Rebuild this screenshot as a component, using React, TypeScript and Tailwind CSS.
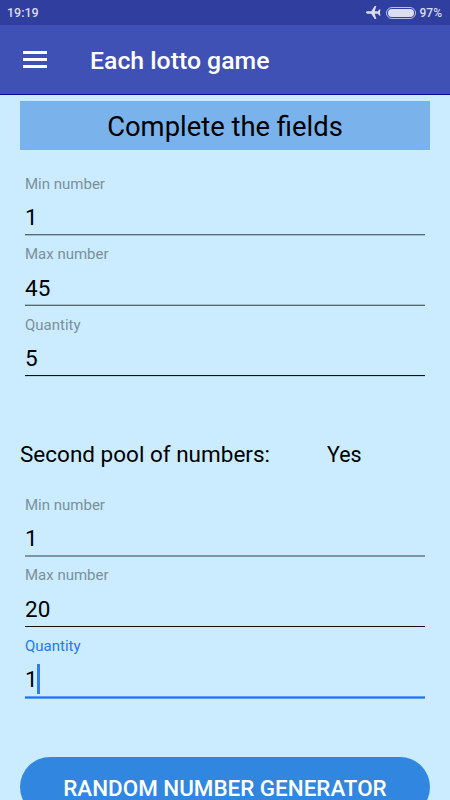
import clsx from 'clsx'

interface Field {
  label: string
  value: string
  height: string
  pad: string
  line: string
  active?: boolean
}

const firstPool: Field[] = [
  { label: 'Min number', value: '1', height: 'h-[71px]', pad: 'pt-[11px] pb-px', line: 'h-[2px] border-t border-[#566a74] bg-[#a3bdca]' },
  { label: 'Max number', value: '45', height: 'h-[70px]', pad: 'pt-[10px] pb-[2px]', line: '-mt-px h-[2px] border-b border-[#566a74] bg-[#a3bdca]' },
  { label: 'Quantity', value: '5', height: 'h-[71px]', pad: 'pt-[11px] pb-px', line: 'h-[2px] border-t border-[#0d1114] bg-[#b4d2e0]' },
]

const secondPool: Field[] = [
  { label: 'Min number', value: '1', height: 'h-[71px]', pad: 'pt-[11px] pb-px', line: 'h-[2px] bg-[#8094a3]' },
  { label: 'Max number', value: '20', height: 'h-[70px]', pad: 'pt-[10px] pb-[2px]', line: 'h-px bg-[#14100f]' },
  { label: 'Quantity', value: '1', height: 'h-[71px]', pad: 'pt-[11px] pb-px', line: 'h-[3px] border-y border-[#5b9df5] bg-[#1f74f2]', active: true },
]

function StatusBar() {
  return (
    <div className="flex h-[25px] shrink-0 items-center bg-[#303f9f] pl-[7px] pr-[8px] text-[#d9dcf1]">
      <span className="mt-[2px] text-[12.500px] font-medium leading-none">19:19</span>
      <svg className="ml-auto h-[13px] w-[15px]" viewBox="0 0 15 13" fill="currentColor">
        <path d="M0 6.500c0-.7.7-1.200 1.500-1.200h3.800L8.700 0h1.700L8.700 5.300h3.200l1.200-1.700h1.400l-.6 2.900.6 2.900h-1.400l-1.200-1.700H8.700l1.700 5.300H8.700L5.300 7.700H1.500C.7 7.700 0 7.200 0 6.500z" />
      </svg>
      <div className="ml-[5px] h-[12px] w-[30px] rounded-full border border-[#b9bfe6] p-px">
        <div className="h-full rounded-full bg-[#dcdff3]" />
      </div>
      <span className="ml-[4px] text-[12px] font-medium leading-none">97%</span>
    </div>
  )
}

function TextField({ field }: { field: Field }) {
  return (
    <div className={field.height}>
      <div className={clsx('flex h-[70px] flex-col justify-between', field.pad)}>
        <label className={clsx('block h-[18px] text-[15px] leading-[18px]', field.active ? 'text-[#2379f0]' : 'text-[#7b909b]')}>
          {field.label}
        </label>
        <div className={clsx('flex h-[32px] items-center text-[22.500px] leading-[32px] text-black', field.height === 'h-[70px]' ? '-mb-[1px]' : 'mb-0')}>
          {field.value}
          {field.active && <span className="-ml-px h-[30px] w-[3px] bg-[#2f7eea]" />}
        </div>
      </div>
      <div className={field.line} />
    </div>
  )
}

export default function App() {
  return (
    <div className="flex h-[800px] w-[450px] flex-col overflow-hidden bg-[#cbecfe] font-['Roboto',sans-serif]">
      <StatusBar />
      <header className="flex h-[70px] shrink-0 items-center border-b border-[#0a08a0] bg-[#3f51b5] pl-[23px] text-white">
        <div className="flex w-[24px] flex-col gap-[4px]">
          <div className="h-[3px] bg-white" />
          <div className="h-[3px] bg-white" />
          <div className="h-[3px] bg-white" />
        </div>
        <h1 className="ml-[43px] mt-[3px] text-[24.800px] font-medium leading-none">Each lotto game</h1>
      </header>

      <main className="px-[20px] pt-[6px]">
        <h2 className="flex h-[49px] items-center justify-center bg-[#7ab3eb] pt-[5px] text-[27.400px] leading-none text-black">
          Complete the fields
        </h2>

        <div className="mt-[14px] px-[5px]">
          {firstPool.map(f => <TextField key={f.label} field={f} />)}
        </div>

        <div className="mt-[63px] flex h-[32px] items-center text-black">
          <span className="w-[307px] text-[22.500px]">Second pool of numbers:</span>
          <span className="text-[21.400px]">Yes</span>
        </div>

        <div className="mt-[14px] px-[5px]">
          {secondPool.map(f => <TextField key={f.label} field={f} />)}
        </div>

        <button className="mt-[60px] block h-[60px] w-full rounded-full bg-[#3187e0] text-[22.400px] font-medium leading-[62px] text-white">
          RANDOM NUMBER GENERATOR
        </button>
      </main>
    </div>
  )
}
